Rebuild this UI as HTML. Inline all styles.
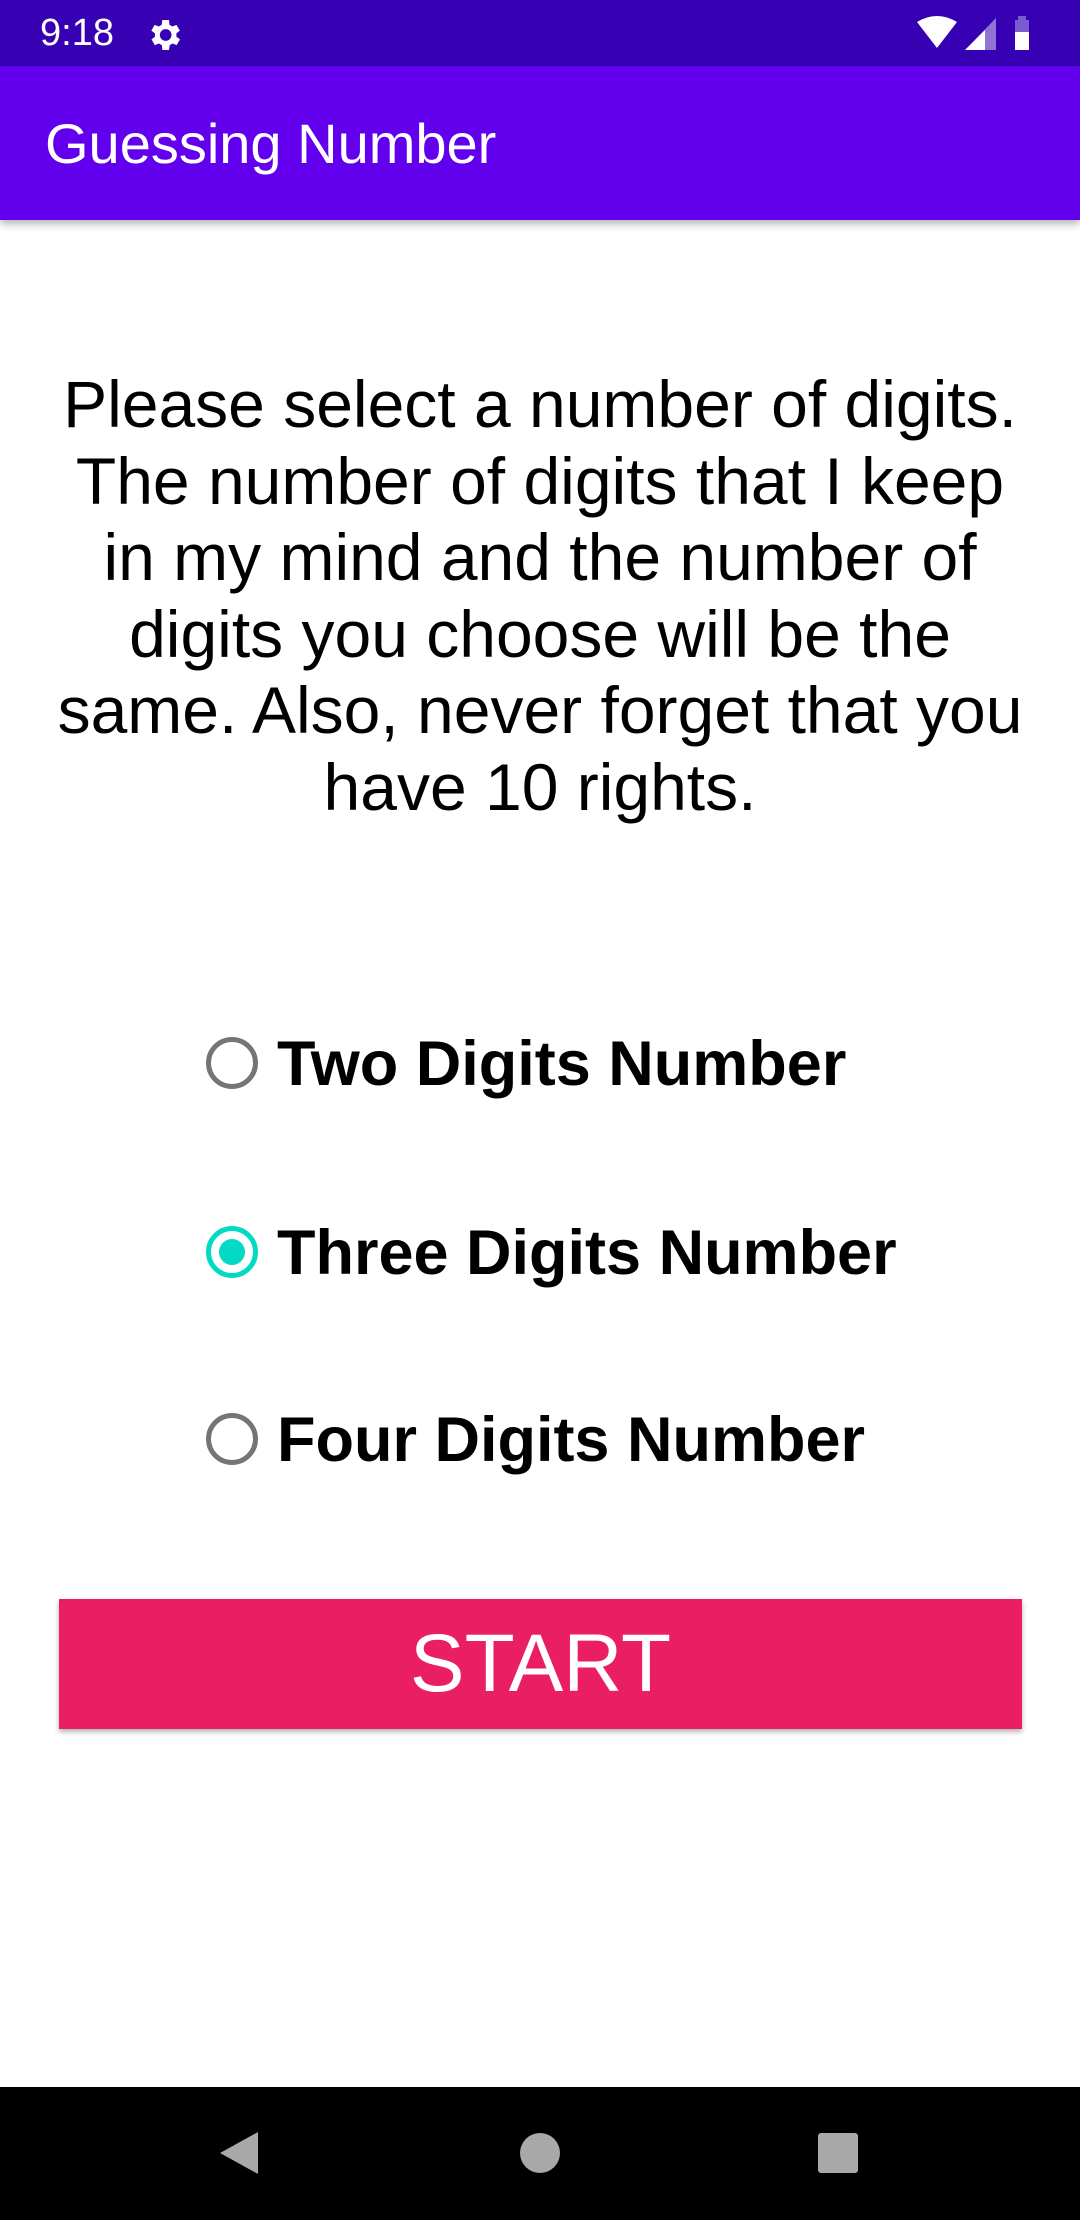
<!DOCTYPE html>
<html><head><meta charset="utf-8"><style>
*{margin:0;padding:0;box-sizing:border-box}
body{width:1080px;height:2220px;position:relative;background:#fff;font-family:"Liberation Sans",sans-serif;overflow:hidden}
.sb{position:absolute;left:0;top:0;width:1080px;height:66px;background:#3700B3}
.ab{position:absolute;left:0;top:66px;width:1080px;height:154px;background:#6200EE;box-shadow:0 4px 8px rgba(0,0,0,.3)}
.t{position:absolute;color:#fff}
.p{position:absolute;left:0;width:1080px;text-align:center;font-size:66px;line-height:76.5px;top:366px;color:#000}
.r{position:absolute;left:277px;font-weight:bold;font-size:63px;color:#000;line-height:70px}
.c{position:absolute;left:206px;width:52px;height:52px;border-radius:50%;border:5px solid #757575}
.btn{position:absolute;left:59px;top:1599px;width:963px;height:130px;background:#E91E63;box-shadow:0 3px 5px rgba(0,0,0,.3);color:#fff;font-size:82px;text-align:center;line-height:130px}
.nav{position:absolute;left:0;top:2087px;width:1080px;height:133px;background:#000}
</style></head><body>
<div class="sb"></div>
<div class="t" style="left:40px;top:12px;font-size:38px">9:18</div>
<svg style="position:absolute;left:144px;top:15px" width="40" height="40" viewBox="0 0 24 24"><path fill="#fff" d="M19.4 13a7.5 7.5 0 000-2l2.1-1.6-2-3.5-2.5 1a7 7 0 00-1.7-1L15 3h-4l-.4 2.9a7 7 0 00-1.7 1l-2.5-1-2 3.5L6.6 11a7.5 7.5 0 000 2l-2.1 1.6 2 3.5 2.5-1a7 7 0 001.7 1L11 21h4l.4-2.9a7 7 0 001.7-1l2.5 1 2-3.5zM13 15.5a3.5 3.5 0 110-7 3.5 3.5 0 010 7z"/></svg>
<svg style="position:absolute;left:915px;top:14px" width="130" height="40" viewBox="0 0 130 40"><path fill="#fff" d="M2 8Q22 -4 42 8L22 34Z"/><path fill="#fff" d="M50 36L81 4V36Z" opacity=".45"/><path fill="#fff" d="M50 36L70 16V36Z"/><rect x="103" y="2" width="8" height="5" fill="#7a5cd0"/><rect x="100" y="6" width="14" height="30" fill="#7a5cd0"/><rect x="100" y="18" width="14" height="18" fill="#fff"/></svg>
<div class="ab"></div>
<div class="t" style="left:45px;top:111px;font-size:56px">Guessing Number</div>
<div class="p">Please select a number of digits.<br>The number of digits that I keep<br>in my mind and the number of<br>digits you choose will be the<br>same. Also, never forget that you<br>have 10 rights.</div>
<div class="c" style="top:1037px"></div>
<div class="r" style="top:1029px">Two Digits Number</div>
<div class="c" style="top:1226px;border-color:#03DAC5"><div style="position:absolute;left:8px;top:8px;width:26px;height:26px;border-radius:50%;background:#03DAC5"></div></div>
<div class="r" style="top:1218px">Three Digits Number</div>
<div class="c" style="top:1413px"></div>
<div class="r" style="top:1405px">Four Digits Number</div>
<div class="btn">START</div>
<div class="nav"></div>
<svg style="position:absolute;left:218px;top:2130px" width="44" height="46" viewBox="0 0 44 46"><path fill="#a8a8a8" d="M40 2V44L2 23Z"/></svg>
<div style="position:absolute;left:520px;top:2133px;width:40px;height:40px;border-radius:50%;background:#a8a8a8"></div>
<div style="position:absolute;left:818px;top:2133px;width:40px;height:40px;border-radius:3px;background:#a8a8a8"></div>
</body></html>
